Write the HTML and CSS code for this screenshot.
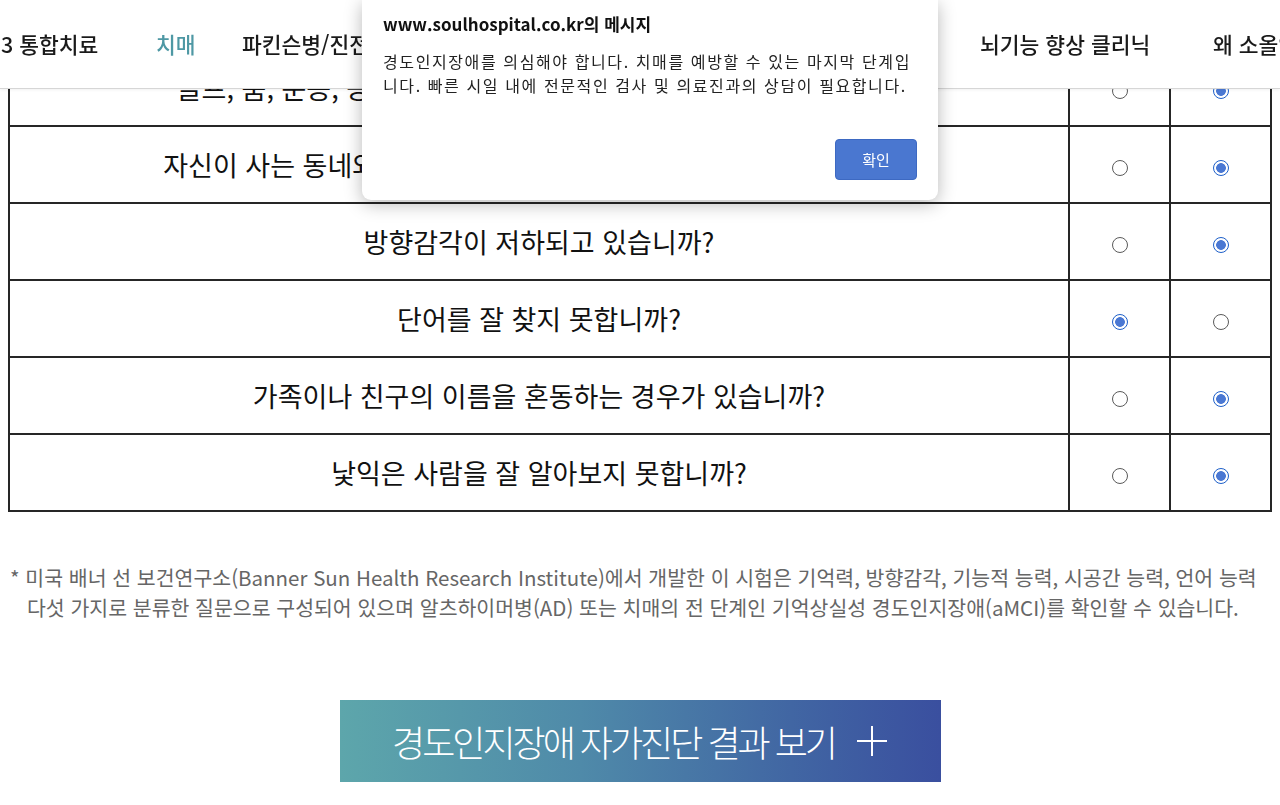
FILE: index.html
```html
<!DOCTYPE html>
<html lang="ko">
<head>
    <meta charset="UTF-8">
    <meta name="viewport" content="width=device-width, initial-scale=1.0">
    <title>경도인지장애 자가진단</title>
    <link rel="stylesheet" href="styles.css">
</head>
<body>
    <header class="site-header">
        <ul class="gnb">
            <li>3 통합치료</li>
            <li class="active">치매</li>
            <li>파킨슨병/진전증</li>
            <li>뇌졸중 후유증</li>
            <li>두통/어지럼증</li>
            <li>안면마비</li>
            <li>뇌기능 향상 클리닉</li>
            <li>왜 소올인가</li>
        </ul>
    </header>

    <main class="content">
        <table class="survey">
            <tr>
                <td class="question">골프, 춤, 운동, 공예 등 과거에 즐기던 활동에 흥미를 잃었습니까?</td>
                <td class="answer"><input type="radio" name="q1"></td>
                <td class="answer"><input type="radio" name="q1" checked></td>
            </tr>
            <tr>
                <td class="question">자신이 사는 동네와 같이 익숙한 장소에서 길을 잃은 적이 있습니까?</td>
                <td class="answer"><input type="radio" name="q2"></td>
                <td class="answer"><input type="radio" name="q2" checked></td>
            </tr>
            <tr>
                <td class="question">방향감각이 저하되고 있습니까?</td>
                <td class="answer"><input type="radio" name="q3"></td>
                <td class="answer"><input type="radio" name="q3" checked></td>
            </tr>
            <tr>
                <td class="question">단어를 잘 찾지 못합니까?</td>
                <td class="answer"><input type="radio" name="q4" checked></td>
                <td class="answer"><input type="radio" name="q4"></td>
            </tr>
            <tr>
                <td class="question">가족이나 친구의 이름을 혼동하는 경우가 있습니까?</td>
                <td class="answer"><input type="radio" name="q5"></td>
                <td class="answer"><input type="radio" name="q5" checked></td>
            </tr>
            <tr>
                <td class="question">낯익은 사람을 잘 알아보지 못합니까?</td>
                <td class="answer"><input type="radio" name="q6"></td>
                <td class="answer"><input type="radio" name="q6" checked></td>
            </tr>
        </table>

        <p class="note">* 미국 배너 선 보건연구소(Banner Sun Health Research Institute)에서 개발한 이 시험은 기억력, 방향감각, 기능적 능력, 시공간 능력, 언어 능력 다섯 가지로 분류한 질문으로 구성되어 있으며 알츠하이머병(AD) 또는 치매의 전 단계인 기억상실성 경도인지장애(aMCI)를 확인할 수 있습니다.</p>

        <div class="result-wrap">
            <button class="result-btn" type="button">
                <span class="result-label">경도인지장애 자가진단 결과 보기</span>
                <svg class="plus" width="32" height="32" viewBox="0 0 32 32">
                    <path d="M16 1v30M1 16h30" stroke="#fff" stroke-width="2" fill="none"/>
                </svg>
            </button>
        </div>
    </main>

    <div class="alert">
        <div class="alert-title">www.soulhospital.co.kr의 메시지</div>
        <div class="alert-body">경도인지장애를 의심해야 합니다. 치매를 예방할 수 있는 마지막 단계입니다. 빠른 시일 내에 전문적인 검사 및 의료진과의 상담이 필요합니다.</div>
        <div class="alert-actions">
            <button class="alert-ok" type="button">확인</button>
        </div>
    </div>
</body>
</html>
```

FILE: styles.css
```css
body {
    margin: 0;
    padding: 0 8px;
    font-family: "Noto Sans CJK KR", "Noto Sans", sans-serif;
    background-color: #fff;
    color: #111;
    overflow: hidden;
}

/* top navigation, fixed over the scrolled page */
.site-header {
    position: fixed;
    top: 0;
    left: 0;
    right: 0;
    height: 88px;
    background-color: #fff;
    border-bottom: 1px solid #d6d6d6;
    box-shadow: 0 1px 3px rgba(0,0,0,0.06);
    z-index: 5;
    overflow: hidden;
}
.gnb {
    list-style: none;
    margin: 0;
    padding: 0 0 0 1px;
    height: 88px;
    display: grid;
    grid-template-columns: 155px 86px 190px 180px 180px 188px 233px 1fr;
    align-items: center;
    white-space: nowrap;
}
.gnb li {
    font-size: 21.5px;
    font-weight: 500;
    color: #1a1a1a;
    margin-top: -1px;
}
.gnb li.active {
    color: #4e98a4;
}

.content {
    padding-top: 48px;
}

/* survey table */
.survey {
    width: 1264px;
    border-collapse: collapse;
    border: 2px solid #262626;
}
.survey td {
    border: 2px solid #262626;
    height: 75px;
    padding: 0;
    vertical-align: middle;
}
.question {
    font-size: 27px;
    font-weight: 400;
    text-align: center;
    color: #111;
}
.answer {
    width: 99px;
    text-align: center;
}
.answer input[type="radio"] {
    appearance: none;
    -webkit-appearance: none;
    display: block;
    width: 16px;
    height: 16px;
    margin: 7px auto 0;
    border: 1px solid #5a5a5a;
    border-radius: 50%;
    background-color: #fff;
}
.answer input[type="radio"]:checked {
    border: 1.5px solid #1d5fc9;
    background: radial-gradient(circle, #4a78d3 0 4.5px, #fff 5.2px);
}

/* footnote */
.note {
    margin: 50px 0 0;
    padding-left: 19px;
    text-indent: -17px;
    font-size: 20.5px;
    line-height: 30px;
    color: #666;
    word-break: keep-all;
}

/* result button */
.result-wrap {
    display: flex;
    justify-content: center;
    margin-top: 78px;
}
.result-btn {
    width: 601px;
    height: 82px;
    border: 0;
    padding: 0;
    display: flex;
    align-items: center;
    justify-content: center;
    gap: 21px;
    background: linear-gradient(90deg, #5da6ab 0%, #4f8aa9 40%, #4166a3 75%, #3a4f9f 100%);
    color: #fff;
    font-family: inherit;
    cursor: pointer;
}
.result-label {
    font-size: 36px;
    font-weight: 300;
    letter-spacing: -3px;
    line-height: 1;
}

/* browser alert dialog */
.alert {
    position: fixed;
    top: 0;
    left: 362px;
    width: 576px;
    height: 200px;
    box-sizing: border-box;
    padding: 12px 21px 0;
    background-color: #fff;
    border-radius: 0 0 9px 9px;
    box-shadow: 0 4px 18px rgba(0,0,0,0.28);
    z-index: 10;
}
.alert-title {
    font-size: 17px;
    font-weight: 700;
    color: #111;
    line-height: 24px;
}
.alert-body {
    margin-top: 13px;
    width: 536px;
    font-size: 16px;
    letter-spacing: 1.6px;
    line-height: 24px;
    color: #222;
    word-break: break-all;
}
.alert-actions {
    display: flex;
    justify-content: flex-end;
    margin-top: 42px;
}
.alert-ok {
    width: 82px;
    height: 41px;
    background-color: #4a77d0;
    border: 1px solid #3d69c2;
    border-radius: 4px;
    color: #fff;
    font-family: inherit;
    font-size: 15px;
}
```
